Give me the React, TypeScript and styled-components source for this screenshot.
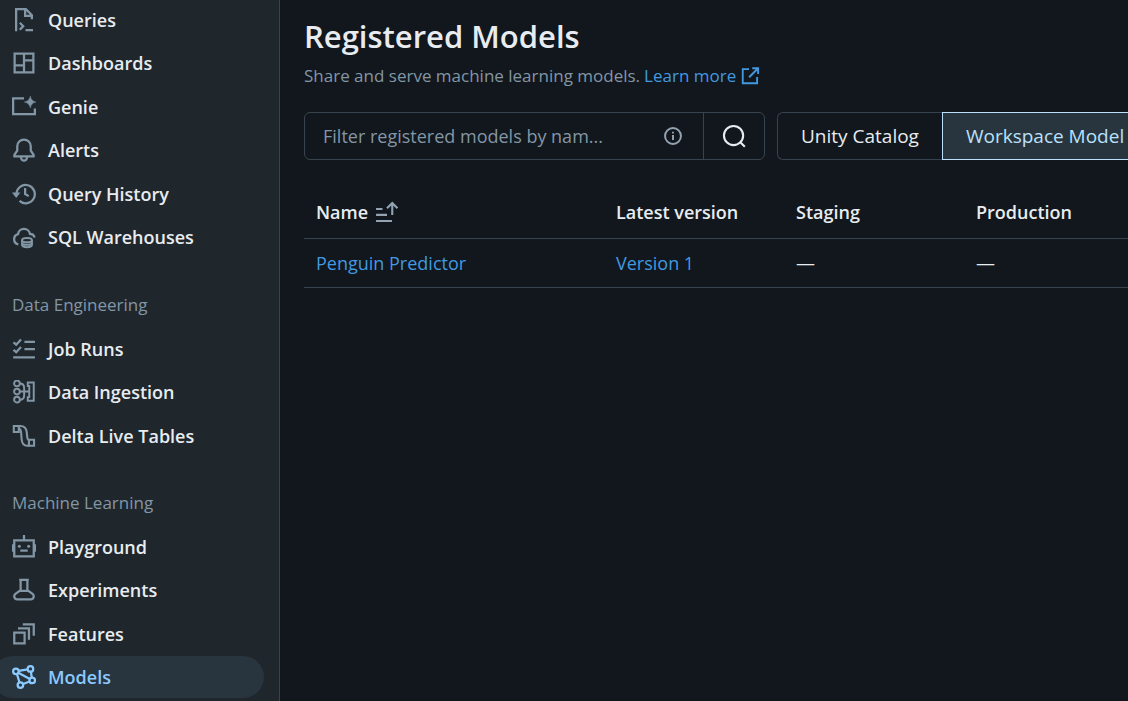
import React from "react";
import styled, { createGlobalStyle, css } from "styled-components";

const c = {
  page: "#11171c",
  side: "#1f272d",
  line: "#37444f",
  text: "#e8ecf0",
  muted: "#8396a5",
  label: "#92a4b3",
  link: "#4299e0",
  active: "#8acaff",
  activeBg: "#28343e",
  segText: "#bae1fc",
};

const GlobalStyle = createGlobalStyle`
  *, *::before, *::after { box-sizing: border-box; }
  html, body { margin: 0; background: ${c.page}; }
  body {
    color: ${c.text};
    font-family: "Open Sans", "Noto Sans", sans-serif;
    font-size: 19px;
    line-height: 28px;
    overflow: hidden;
  }
  button, input { font: inherit; color: inherit; }
`;

const Shell = styled.div`
  display: flex;
  height: 100vh;
`;

const Sidebar = styled.nav`
  display: flex;
  flex-direction: column;
  flex: none;
  width: 280px;
  padding-bottom: 2px;
  background: ${c.side};
  border-right: 1px solid ${c.line};
  overflow: hidden;
`;

const Groups = styled.div`
  display: flex;
  flex-direction: column;
  flex: 1;
  gap: 24px;
  margin-top: -2px;
`;

const Group = styled.section<{ $rows: number }>`
  display: flex;
  flex-direction: column;
  flex: ${(p) => p.$rows} 1 0;
`;

const GroupTitle = styled.h2`
  display: flex;
  align-items: center;
  flex: 1;
  margin: 0;
  padding-left: 12px;
  color: ${c.muted};
  font-size: 17px;
  font-weight: 400;
`;

const NavRow = styled.div`
  display: flex;
  align-items: center;
  flex: 1;
`;

const NavLink = styled.a<{ $active?: boolean }>`
  display: flex;
  align-items: center;
  flex: 1;
  gap: 12px;
  height: 42px;
  margin: 0 15px 0 -8px;
  padding-left: 20px;
  border-radius: 21px;
  color: ${c.text};
  font-size: 18px;
  font-weight: 600;
  text-decoration: none;
  svg { color: ${c.muted}; }
  ${(p) =>
    p.$active &&
    css`
      background: ${c.activeBg};
      color: ${c.active};
      svg { color: ${c.active}; }
    `}
`;

const Svg = styled.svg`
  flex: none;
  display: block;
  fill: none;
  stroke: currentColor;
  stroke-width: 1.5;
`;

const Main = styled.main`
  flex: 1;
  min-width: 0;
  padding: 12px 0 0 24px;
  overflow: hidden;
`;

const Title = styled.h1`
  margin: 0;
  font-size: 31px;
  font-weight: 600;
  line-height: 48px;
`;

const Subtitle = styled.p`
  display: flex;
  align-items: center;
  gap: 4px;
  margin: 2px 0 0;
  color: ${c.muted};
  font-size: 17px;
`;

const TextLink = styled.a`
  display: inline-flex;
  align-items: center;
  gap: 4px;
  color: ${c.link};
  text-decoration: none;
`;

const Toolbar = styled.div`
  display: flex;
  gap: 12px;
  margin-top: 22px;
`;

const SearchBox = styled.div`
  display: flex;
  flex: none;
  width: 461px;
  height: 48px;
  border: 1px solid ${c.line};
  border-radius: 6px;
`;

const Field = styled.label`
  display: flex;
  align-items: center;
  flex: 1;
  padding: 0 18px;
  color: ${c.label};
`;

const FilterInput = styled.input`
  flex: 1;
  min-width: 0;
  height: 100%;
  padding: 0;
  border: 0;
  outline: 0;
  background: none;
  font-size: 18px;
  &::placeholder { color: ${c.muted}; opacity: 1; }
`;

const SearchButton = styled.button`
  display: grid;
  place-items: center;
  width: 61px;
  padding: 0;
  border: 0;
  border-left: 1px solid ${c.line};
  background: none;
  color: ${c.text};
`;

const Segments = styled.div`
  display: flex;
  flex: 1;
  min-width: 0;
`;

const Segment = styled.button<{ $on?: boolean }>`
  height: 48px;
  padding: 0 23px;
  border: 1px solid ${c.line};
  border-right: 0;
  border-radius: 6px 0 0 6px;
  background: none;
  text-align: left;
  white-space: nowrap;
  ${(p) =>
    p.$on &&
    css`
      flex: 1;
      padding-right: 0;
      border-color: ${c.segText};
      border-radius: 0;
      background: ${c.activeBg};
      color: ${c.segText};
    `}
`;

const Table = styled.table`
  width: 100%;
  margin-top: 26px;
  border-collapse: collapse;
  table-layout: fixed;
`;

const Cell = styled.td`
  height: 49px;
  padding: 0 12px;
  border-bottom: 1px solid ${c.line};
  ${TextLink} { font-size: 18px; }
`;

const Head = styled.th<{ $w?: number }>`
  width: ${(p) => (p.$w ? p.$w + "px" : "auto")};
  height: 52px;
  padding: 0 12px;
  border-bottom: 1px solid ${c.line};
  font-size: 18px;
  font-weight: 600;
  text-align: left;
`;

const Sorted = styled.span`
  display: flex;
  align-items: center;
  gap: 7px;
  svg { color: ${c.label}; }
`;

function Icon({ size = 24, children }: { size?: number; children: React.ReactNode }) {
  return (
    <Svg width={size} height={size} viewBox="0 0 16 16" aria-hidden="true">
      {children}
    </Svg>
  );
}

const icons: Record<string, React.ReactNode> = {
  Queries: (
    <path d="M2.75 15.5V.75h6.5l4 4V7.5M8.75.75v4.5h4.5M5.2 9.8l2.3 2.3-2.3 2.4M9 14.75h5" />
  ),
  Dashboards: <path d="M1.75 1.75h12.5v12.5H1.75zM8 1.75v12.5M1.75 9.5H8M8 6.25h6.25" />,
  Genie: (
    <>
      <path d="M8 2.25H.75v10.5h14.5V9" />
      <path
        d="M12.2 .8c.6 2.4 1.500 3.300 4 3.900-2.500.6-3.400 1.500-4 3.900-.6-2.400-1.500-3.300-4-3.900 2.500-.6 3.400-1.500 4-3.900z"
        fill="currentColor"
        strokeWidth="0.3"
      />
    </>
  ),
  Alerts: (
    <path d="M8 1a4.5 4.5 0 0 0-4.5 4.5v2.9L1.6 11.3v.95h12.8v-.95l-1.9-2.9V5.5A4.5 4.5 0 0 0 8 1zM6 12.4v.6a2 2 0 0 0 4 0v-.6" />
  ),
  "Query History": (
    <>
      <path d="M3 8.2V8a6.1 6.1 0 1 1 2 4.6M8.75 4v4l2.4 1.4" />
      <path d="M0 7h5.600L2.800 10.600z" fill="currentColor" stroke="none" />
    </>
  ),
  "SQL Warehouses": (
    <>
      <path d="M4.2 12.9A3.5 3.5 0 0 1 4 6.1 4.05 4.05 0 0 1 12 6a3.2 3.2 0 0 1 3.1 2.3" />
      <path
        d="M6.7 10.2v3.2c0 .8 1.5 1.4 3.3 1.4s3.3-.6 3.3-1.4v-3.2M6.7 11.8c0 .8 1.5 1.4 3.3 1.4s3.3-.6 3.3-1.4"
        strokeWidth="1.3"
      />
      <ellipse cx="10" cy="10.1" rx="3.3" ry="1.4" strokeWidth="1.3" />
    </>
  ),
  "Job Runs": (
    <>
      <path d="M8.3 3.25H15.3M8.3 8H15.3M.8 13.5h14.5" />
      <path d="M1 3.6l1.8 1.5L6 1.7M1 8.6l1.8 1.5L6 6.7" />
    </>
  ),
  "Data Ingestion": (
    <g strokeWidth="1.3">
      <circle cx="3.3" cy="2.3" r="1.9" />
      <circle cx="3.3" cy="7.700" r="1.9" />
      <circle cx="3.3" cy="13.1" r="1.9" />
      <path d="M5.2 2.300c2 0 2.900 1.200 2.900 3v4.800c0 1.800-.9 3-2.900 3M5.200 7.700h6.300M11.500 7.700V4h-1V1.600h4v12.200h-4v-2.400h1z" />
    </g>
  ),
  "Delta Live Tables": (
    <g strokeWidth="1.4">
      <path d="M1.2 1.3h3.300v4H1.200zM11.300 10.500h3.400v4h-3.400z" />
      <path d="M4.500 1.300h1c2.600 0 4 1.500 4.300 4l.3 3c.1 1.500.5 2.200 1.200 2.200M4.500 3c1.200.3 1.500 1.500 1.600 3l.3 4c.2 3 1.500 4.500 3.900 4.500h1" />
    </g>
  ),
  Playground: (
    <>
      <path d="M1.500 3.500h13v10.750h-13zM8 0v3.500M.6 6.200v5M15.400 6.200v5" />
      <path d="M5.500 10.400h5" />
      <g fill="currentColor" stroke="none">
        <circle cx="4.900" cy="7.500" r="1" />
        <circle cx="11.100" cy="7.500" r="1" />
      </g>
    </>
  ),
  Experiments: (
    <path d="M4.800 1.250h6.400M5.750 1.250v6.900L2.500 10.400c-1.800 1.300-1 3.850 1 3.850h9c2 0 2.800-2.550 1-3.850l-3.250-2.250v-6.900M4.800 8.600h6.400" />
  ),
  Features: (
    <path d="M1.500 7h6.900v7.250H1.500zM4 4.250h7.300v7.500M7.200 1.500h7.300v7.600" />
  ),
  Models: (
    <>
      <circle cx="2.600" cy="4.200" r="1.850" />
      <circle cx="12.300" cy="2.600" r="1.850" />
      <circle cx="13.500" cy="10.300" r="1.850" />
      <circle cx="5.600" cy="13.400" r="1.850" />
      <path d="M4.400 3.900l6-1M12.600 4.500l.6 4M4.200 5.200l7.700 4.200M3.300 6l1.700 5.700M7.300 12.700l4.500-1.700" />
    </>
  ),
};

const groups = [
  {
    title: "",
    items: ["Queries", "Dashboards", "Genie", "Alerts", "Query History", "SQL Warehouses"],
  },
  { title: "Data Engineering", items: ["Job Runs", "Data Ingestion", "Delta Live Tables"] },
  { title: "Machine Learning", items: ["Playground", "Experiments", "Features", "Models"] },
];

export default function App() {
  return (
    <>
      <GlobalStyle />
      <Shell>
        <Sidebar aria-label="Workspace">
          <Groups>
            {groups.map((g) => (
              <Group key={g.title} $rows={g.items.length + (g.title ? 1 : 0)}>
                {g.title && <GroupTitle>{g.title}</GroupTitle>}
                {g.items.map((name) => (
                  <NavRow key={name}>
                    <NavLink href="#" $active={name === "Models"}>
                      <Icon>{icons[name]}</Icon>
                      {name}
                    </NavLink>
                  </NavRow>
                ))}
              </Group>
            ))}
          </Groups>
        </Sidebar>
        <Main>
          <Title>Registered Models</Title>
          <Subtitle>
            Share and serve machine learning models.
            <TextLink href="#">
              Learn more
              <Icon size={20}>
                <path d="M7.200 2.500H2.200v11.300h11.500V8.800M9.800 1.750h4.700v4.700M14.300 2L7.300 9" />
              </Icon>
            </TextLink>
          </Subtitle>
          <Toolbar>
            <SearchBox>
              <Field>
                <FilterInput
                  aria-label="Filter registered models"
                  placeholder="Filter registered models by nam..."
                />
                <Icon size={24}>
                  <circle cx="8" cy="8" r="5.300" strokeWidth="1.300" />
                  <path d="M8 7.400v3.300M8 5.100v1.300" strokeWidth="1.300" />
                </Icon>
              </Field>
              <SearchButton aria-label="Search">
                <Icon size={24}>
                  <circle cx="7.700" cy="7.700" r="6.400" strokeWidth="1.400" />
                  <path d="M12.200 12.200l3 3" strokeWidth="1.400" />
                </Icon>
              </SearchButton>
            </SearchBox>
            <Segments>
              <Segment>Unity Catalog</Segment>
              <Segment $on>Workspace Model</Segment>
            </Segments>
          </Toolbar>
          <Table>
            <thead>
              <tr>
                <Head $w={300} aria-sort="ascending">
                  <Sorted>
                    Name
                    <Icon>
                      <path d="M.7 6h4.300M.7 9.900h7.300M.7 14h10.600M11.500 10V2.200M8 5.500L11.500 2 15 5.500" strokeWidth="1.400" />
                    </Icon>
                  </Sorted>
                </Head>
                <Head $w={180}>Latest version</Head>
                <Head $w={180}>Staging</Head>
                <Head>Production</Head>
              </tr>
            </thead>
            <tbody>
              <tr>
                <Cell>
                  <TextLink href="#">Penguin Predictor</TextLink>
                </Cell>
                <Cell>
                  <TextLink href="#">Version 1</TextLink>
                </Cell>
                <Cell>—</Cell>
                <Cell>—</Cell>
              </tr>
            </tbody>
          </Table>
        </Main>
      </Shell>
    </>
  );
}
